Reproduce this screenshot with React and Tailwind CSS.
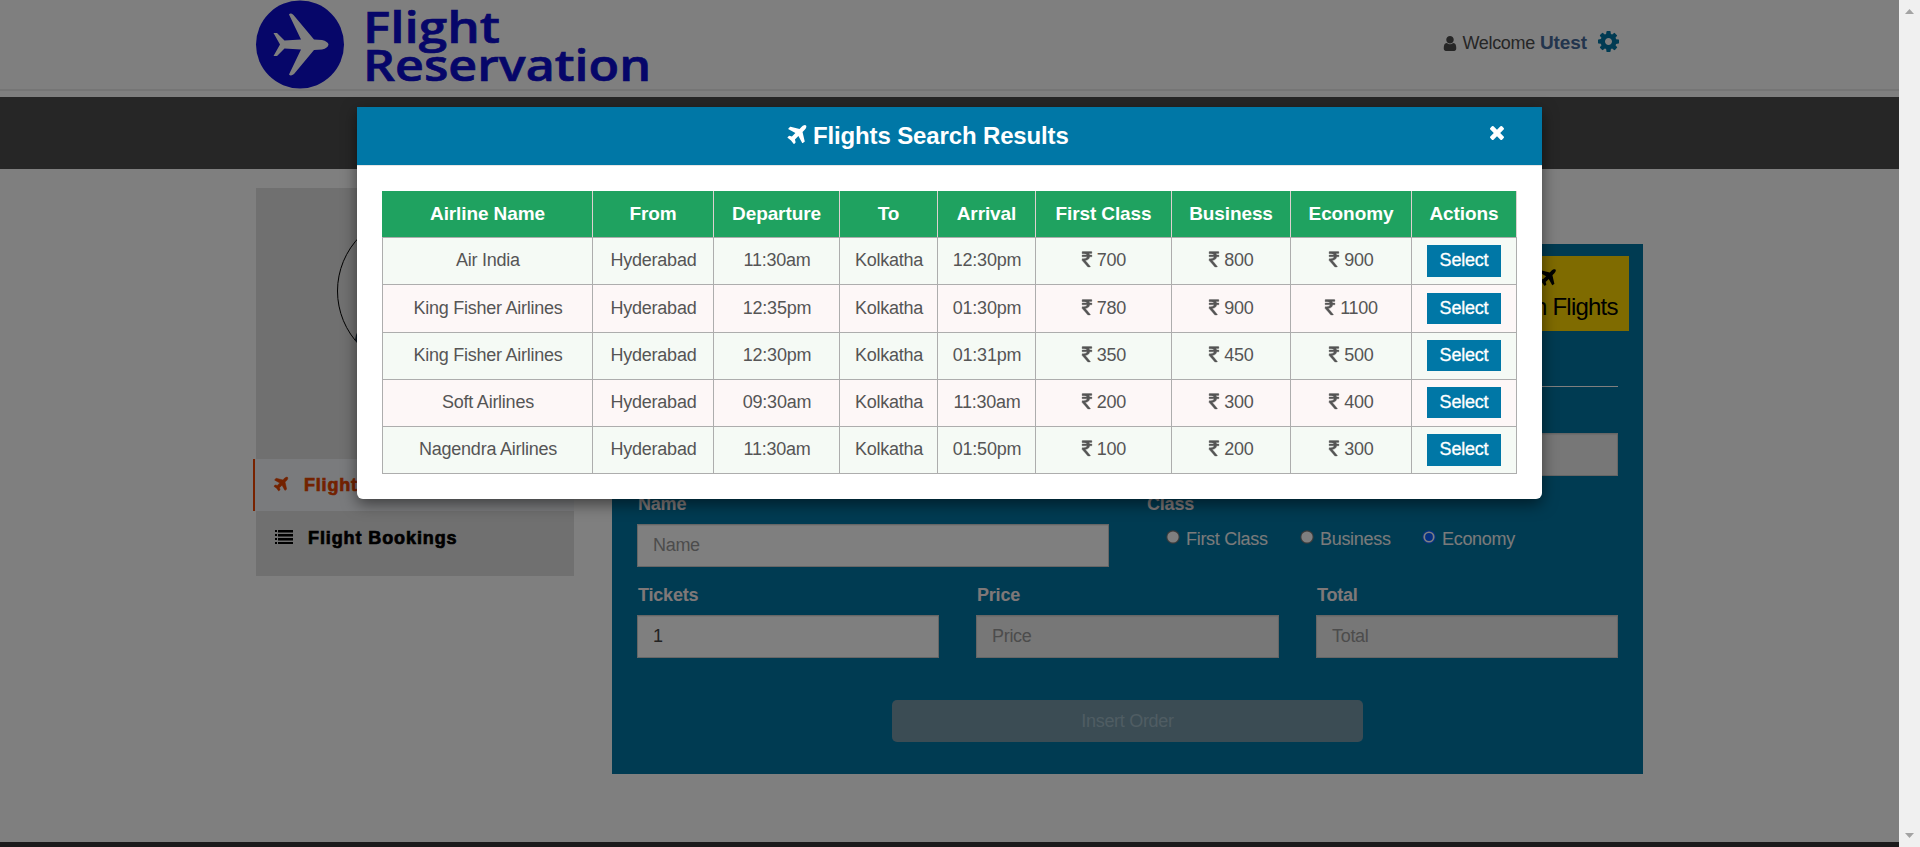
import React from "react";

const PLANE =
  "M1568 160q44 52 12 148t-108 172l-161 161 160 696q5 19-12 33l-128 96q-7 6-19 6-4 0-7-1-15-3-21-16l-279-508-259 259 53 194q5 17-8 31l-96 96q-9 9-23 9h-2q-15-2-24-13l-189-252-252-189q-11-7-13-23-1-13 9-25l96-97q9-9 23-9 6 0 8 1l194 53 259-259-508-279q-14-8-17-24-2-16 9-27l128-128q14-13 30-8l665 159 160-160q76-76 172-108t148 12z";
const TIMES =
  "M1490 1322q0 40-28 68l-136 136q-28 28-68 28t-68-28l-294-294-294 294q-28 28-68 28t-68-28l-136-136q-28-28-28-68t28-68l294-294-294-294q-28-28-28-68t28-68l136-136q28-28 68-28t68 28l294 294 294-294q28-28 68-28t68 28l136 136q28 28 28 68t-28 68l-294 294 294 294q28 28 28 68z";
const COG =
  "M1152 896q0-106-75-181t-181-75-181 75-75 181 75 181 181 75 181-75 75-181zm512-109v222q0 12-8 23t-20 13l-185 28q-19 54-39 91 35 50 107 138 10 12 10 25t-9 23q-27 37-99 108t-94 71q-12 0-26-9l-138-108q-44 23-91 38-16 136-29 186-7 28-36 28h-222q-14 0-24.500-8.500t-11.500-21.500l-28-184q-49-16-90-37l-141 107q-10 9-25 9-14 0-25-11-126-114-165-168-7-10-7-23 0-12 8-23 15-21 51-66.500t54-70.500q-27-50-41-99l-183-27q-13-2-21-12.500t-8-23.500v-222q0-12 8-23t19-13l186-28q14-46 39-92-40-57-107-138-10-12-10-24 0-10 9-23 26-36 98.500-107.500t94.500-71.500q13 0 26 10l138 107q44-23 91-38 16-136 29-186 7-28 36-28h222q14 0 24.500 8.500t11.500 21.500l28 184q49 16 90 37l142-107q9-9 24-9 13 0 25 10 129 119 165 170 7 8 7 22 0 12-8 23-15 21-51 66.500t-54 70.500q26 50 41 98l183 28q13 2 21 12.500t8 23.500z";
const USER =
  "M1536 1399q0 109-62.500 187t-150.500 78h-854q-88 0-150.500-78t-62.500-187q0-85 8.500-160.500t31.500-152 58.500-131 94-89 134.500-34.500q131 128 313 128t313-128q76 0 134.500 34.500t94 89 58.500 131 31.500 152 8.500 160.500zm-256-887q0 159-112.500 271.500t-271.500 112.500-271.500-112.500-112.500-271.500 112.500-271.500 271.500-112.500 271.500 112.500 112.500 271.500z";
const RUPEE =
  "M1345 470v102q0 14-9 23t-23 9h-168q-23 144-129 234t-276 110q167 178 459 536 14 16 4 34-8 18-29 18h-195q-16 0-25-12-306-367-498-571-9-9-9-22v-127q0-13 9.500-22.500t22.500-9.500h112q132 0 212.500-43t102.500-125h-427q-14 0-23-9t-9-23v-102q0-14 9-23t23-9h413q-57-113-268-113h-145q-13 0-22.500-9.500t-9.500-22.500v-133q0-14 9-23t23-9h832q14 0 23 9t9 23v102q0 14-9 23t-23 9h-233q47 61 64 144h171q14 0 23 9t9 23z";

function Icon({ d, box, className }) {
  return (
    <svg viewBox={box} className={className} fill="currentColor" aria-hidden="true">
      <path d={d} />
    </svg>
  );
}

function Logo() {
  return (
    <svg width="400" height="89" viewBox="0 0 400 89" className="block shrink-0 overflow-visible" fill="#0c0cd2">
      <circle cx="44" cy="44.500" r="44" />
      <path
        fill="#fff"
        d="M17.500 33H21L28.500 40.500 45 39.500 33 14.500Q34.500 12.500 37.500 15L58 39.500 66 40Q72 41.500 72.500 44.500 72 48 66 49.500L58 50 38 74Q35 76.500 33 74.500L45 49.500 28.500 48.500 21 56H17.500L24 44.500Z"
      />
      <g fontFamily="'Open Sans', sans-serif" fontWeight="600" fontSize="44" stroke="#0c0cd2" strokeWidth="0.7">
        <text x="107" y="42.500" textLength="137" lengthAdjust="spacingAndGlyphs">Flight</text>
        <text x="107" y="81" textLength="288" lengthAdjust="spacingAndGlyphs">Reservation</text>
      </g>
    </svg>
  );
}

function Header() {
  return (
    <header className="h-[97px] bg-white">
      <div className="flex h-[91px] items-start justify-between border-b-2 border-[#eaeaea] pl-[256px] pr-[280px]">
        <Logo />
        <div className="flex pt-[30px] text-[18px] leading-[26px]">
          <Icon d={USER} box="256 128 1280 1536" className="mt-[6px] mr-[5px] h-[15px] w-[14px] text-[#4d4d4d]" />
          <span className="tracking-[-0.3px] text-[#4d4d4d]">Welcome</span>
          <b className="ml-[5px] text-[19px] tracking-[-0.1px] text-[#466a9b]">Utest</b>
          <Icon d={COG} box="128 128 1536 1536" className="ml-[11px] mt-px h-[21px] w-[21px] text-[#0077a6]" />
        </div>
      </div>
    </header>
  );
}

function Sidebar() {
  return (
    <aside className="h-[388px] w-[321px] pl-[3px]">
      <div className="flex h-[271px] justify-center bg-[#e0e0e0] pt-[25px]">
        <svg width="156" height="156" viewBox="0 0 156 156">
          <circle cx="78" cy="78" r="77.500" fill="#e2e2e2" stroke="#000" />
          <path d="M18 127Q19 116 28 112L60 98H96L128 112Q137 117 138 127A77 77 0 0 1 18 127Z" fill="#1d2f3f" />
          <circle cx="78" cy="68" r="30" fill="#1d2f3f" />
        </svg>
      </div>
      <div className="-ml-[3px] flex h-[52px] items-center border-l-2 border-[#f04400] bg-[#f5f7fa] pl-[19px] text-[18px] font-bold text-[#e64400]">
        <Icon d={PLANE} box="190 128 1420 1408" className="mt-[-3px] h-[14px] w-[14px] overflow-visible stroke-current [stroke-width:50]" />
        <span className="ml-[16px] tracking-[0.8px] [-webkit-text-stroke:0.7px]">Flight</span>
      </div>
      <div className="flex h-[65px] items-start bg-[#e0e0e0] pl-[19px] pt-[14px] text-[18px] leading-[27px] font-bold text-black">
        <svg width="18" height="14" viewBox="0 0 18 14" className="mt-[5px]">
          <path d="M0 0h2v2H0zM3 0h15v2.400H3zM0 4h2v2H0zM3 4h15v2.400H3zM0 8h2v2H0zM3 8h15v2.400H3zM0 12h2v2H0zM3 12h15v2.400H3z" />
        </svg>
        <span className="ml-[15px] tracking-[0.9px] [-webkit-text-stroke:0.7px]">Flight Bookings</span>
      </div>
    </aside>
  );
}

function Field({ label, width, disabled, children }) {
  return (
    <div className={width}>
      <div className="h-[32px] pl-px text-[18px] leading-[24px] font-bold tracking-[-0.2px] text-[#fff0f0]">{label}</div>
      <div
        className={
          "flex h-[43px] items-center border border-[#ccc] px-[15px] text-[18px] tracking-[-0.3px] shadow-[inset_0_1px_1px_rgba(0,0,0,.075)] " +
          (disabled ? "bg-[#eee]" : "bg-white")
        }
      >
        {children}
      </div>
    </div>
  );
}

function Radio({ label, checked, width }) {
  return (
    <label className={"flex items-center " + width}>
      <svg width="14" height="14" viewBox="0 0 14 14" className="mb-[4px] mr-[6px] shrink-0">
        <circle cx="7" cy="7" r="6.700" fill={checked ? "#0b5fff" : "#767676"} />
        <circle cx="7" cy="7" r="5.600" fill="#fff" />
        {checked && <circle cx="7" cy="7" r="3.900" fill="#0b5fff" />}
      </svg>
      <span className="tracking-[-0.3px] text-[#f5f5f5]">{label}</span>
    </label>
  );
}

function OrderForm() {
  return (
    <section className="mt-[56px] h-[530px] w-[1031px] bg-[#0077a5] pl-[25px] pr-[25px]">
      <div className="-mr-[11px] flex justify-end pt-[12px]">
        <div className="flex h-[75px] w-[163px] flex-col items-center bg-[#ffd700] pt-[13px] text-[24px] leading-[30px] text-black">
          <Icon d={PLANE} box="190 128 1420 1408" className="h-[17px] w-[17px] shrink-0" />
          <span className="mt-[6px] pr-[2px] tracking-[-0.8px] whitespace-nowrap">Search Flights</span>
        </div>
      </div>
      <div className="mt-[55px] h-px bg-white" />
      <div className="mt-[14px] flex justify-between">
        <Field width="w-[302px]" />
        <Field width="w-[302px]" />
        <Field width="w-[302px]" disabled />
      </div>
      <div className="mt-[16px] flex">
        <Field label="Name" width="w-[472px]"><span className="text-[#999]">Name</span></Field>
        <div className="ml-[37px]">
          <div className="h-[32px] pl-px text-[18px] leading-[24px] font-bold tracking-[-0.2px] text-[#fff0f0]">Class</div>
          <div className="mt-px flex pl-[20px] text-[18px] leading-[28px]">
            <Radio label="First Class" width="w-[134px]" />
            <Radio label="Business" width="w-[122px]" />
            <Radio label="Economy" width="w-[122px]" checked />
          </div>
        </div>
      </div>
      <div className="mt-[16px] flex justify-between">
        <Field label="Tickets" width="w-[302px]"><span className="text-[#444]">1</span></Field>
        <Field label="Price" width="w-[303px]" disabled><span className="text-[#999]">Price</span></Field>
        <Field label="Total" width="w-[302px]" disabled><span className="text-[#999]">Total</span></Field>
      </div>
      <div className="mt-[42px] flex justify-center">
        <div className="flex h-[42px] w-[471px] items-center justify-center rounded-[5px] bg-[#7698a8] text-[18px] tracking-[-0.3px] text-[#9fbac6]">
          Insert Order
        </div>
      </div>
    </section>
  );
}

const COLUMNS = ["Airline Name", "From", "Departure", "To", "Arrival", "First Class", "Business", "Economy", "Actions"];
const FLIGHTS = [
  ["Air India", "Hyderabad", "11:30am", "Kolkatha", "12:30pm", 700, 800, 900],
  ["King Fisher Airlines", "Hyderabad", "12:35pm", "Kolkatha", "01:30pm", 780, 900, 1100],
  ["King Fisher Airlines", "Hyderabad", "12:30pm", "Kolkatha", "01:31pm", 350, 450, 500],
  ["Soft Airlines", "Hyderabad", "09:30am", "Kolkatha", "11:30am", 200, 300, 400],
  ["Nagendra Airlines", "Hyderabad", "11:30am", "Kolkatha", "01:50pm", 100, 200, 300],
];
const ROW_HEIGHTS = ["h-[47px]", "h-[48px]", "h-[47px]", "h-[47px]", "h-[47px]"];
const BUTTON_SIZES = ["h-[32px] mt-[7px] pb-[2px]", "h-[31px] mt-[8px] pb-px", "h-[31px] mt-[7px] pb-px", "h-[31px] mt-[7px] pb-px", "h-[32px] mt-[7px] pb-[2px]"];
const GRID = "grid grid-cols-[210px_121px_126px_98px_98px_136px_119px_121px_105px]";

function ResultsTable() {
  return (
    <div className="w-[1135px] border-l border-[#adadad]">
      <div className={GRID + " -ml-px h-[47px] border-b border-[#adadad] bg-[#1fa260] pl-px text-[19px] font-bold text-white"}>
        {COLUMNS.map((c) => (
          <div key={c} className="flex items-center justify-center border-r border-[#ddd0d0] pt-px tracking-[-0.1px]">{c}</div>
        ))}
      </div>
      {FLIGHTS.map((row, r) => (
        <div
          key={r}
          className={GRID + " border-b border-[#adadad] text-[18px] text-[#555] " + ROW_HEIGHTS[r] + (r % 2 ? " bg-[#fdf7f7]" : " bg-[#f5faf5]")}
        >
          {row.map((v, i) => (
            <div key={i} className="flex items-center justify-center border-r border-[#adadad] pb-px pl-px tracking-[-0.25px]">
              {typeof v === "number" && (
                <Icon d={RUPEE} box="447 256 898 1280" className="mr-[5px] mb-px h-[14px] w-[10px] overflow-visible stroke-current [stroke-width:30]" />
              )}
              {v}
            </div>
          ))}
          <div className="flex items-start justify-center border-r border-[#adadad]">
            <button
              className={
                "w-[74px] bg-[#0077a6] text-[18px] leading-[26px] tracking-[-0.2px] text-white [-webkit-text-stroke:0.3px] " + BUTTON_SIZES[r]
              }
            >
              Select
            </button>
          </div>
        </div>
      ))}
    </div>
  );
}

function ResultsModal() {
  return (
    <div className="h-[392px] w-[1185px] overflow-hidden rounded-b-[6px] bg-white">
      <div className="flex h-[59px] border-b border-[#e5e5e5] bg-[#0077a6] text-white">
        <div className="ml-[430px] flex w-[690px]">
          <Icon d={PLANE} box="190 128 1420 1408" className="mt-[18px] h-[19px] w-[20px]" />
          <h4 className="ml-[6px] mt-[12px] text-[24px] leading-[34px] font-bold tracking-[-0.14px]">Flights Search Results</h4>
        </div>
        <Icon d={TIMES} box="302 366 1188 1188" className="ml-[13px] mt-[19px] h-[14px] w-[14px]" />
      </div>
      <div className="pl-[25px] pt-[25px]">
        <ResultsTable />
      </div>
    </div>
  );
}

export default function App() {
  return (
    <div className="flex h-[847px] w-[1920px] overflow-hidden bg-white font-['Liberation_Sans',Arial,sans-serif]">
      <div className="relative h-[847px] w-[1899px] overflow-hidden">
        <Header />
        <nav className="h-[72px] bg-[#4c4c4c]" />
        <main className="flex h-[673px] items-start pl-[253px] pt-[19px]">
          <Sidebar />
          <div className="ml-[38px]">
            <OrderForm />
          </div>
        </main>
        <footer className="h-[5px] bg-[#363436]" />
        <div className="absolute inset-0 bg-black/50" />
        <div className="absolute left-[357px] top-[107px] rounded-b-[6px] shadow-[0_5px_15px_rgba(0,0,0,.5)]">
          <ResultsModal />
        </div>
      </div>
      <div className="flex w-[21px] flex-col items-center justify-between bg-[#f0f0f0] pb-[9px] pt-[9px]">
        <svg width="9" height="5" viewBox="0 0 9 5" fill="#a3a3a3"><path d="M0 5 4.500 0 9 5Z" /></svg>
        <svg width="9" height="5" viewBox="0 0 9 5" fill="#a3a3a3"><path d="M0 0 4.500 5 9 0Z" /></svg>
      </div>
    </div>
  );
}
